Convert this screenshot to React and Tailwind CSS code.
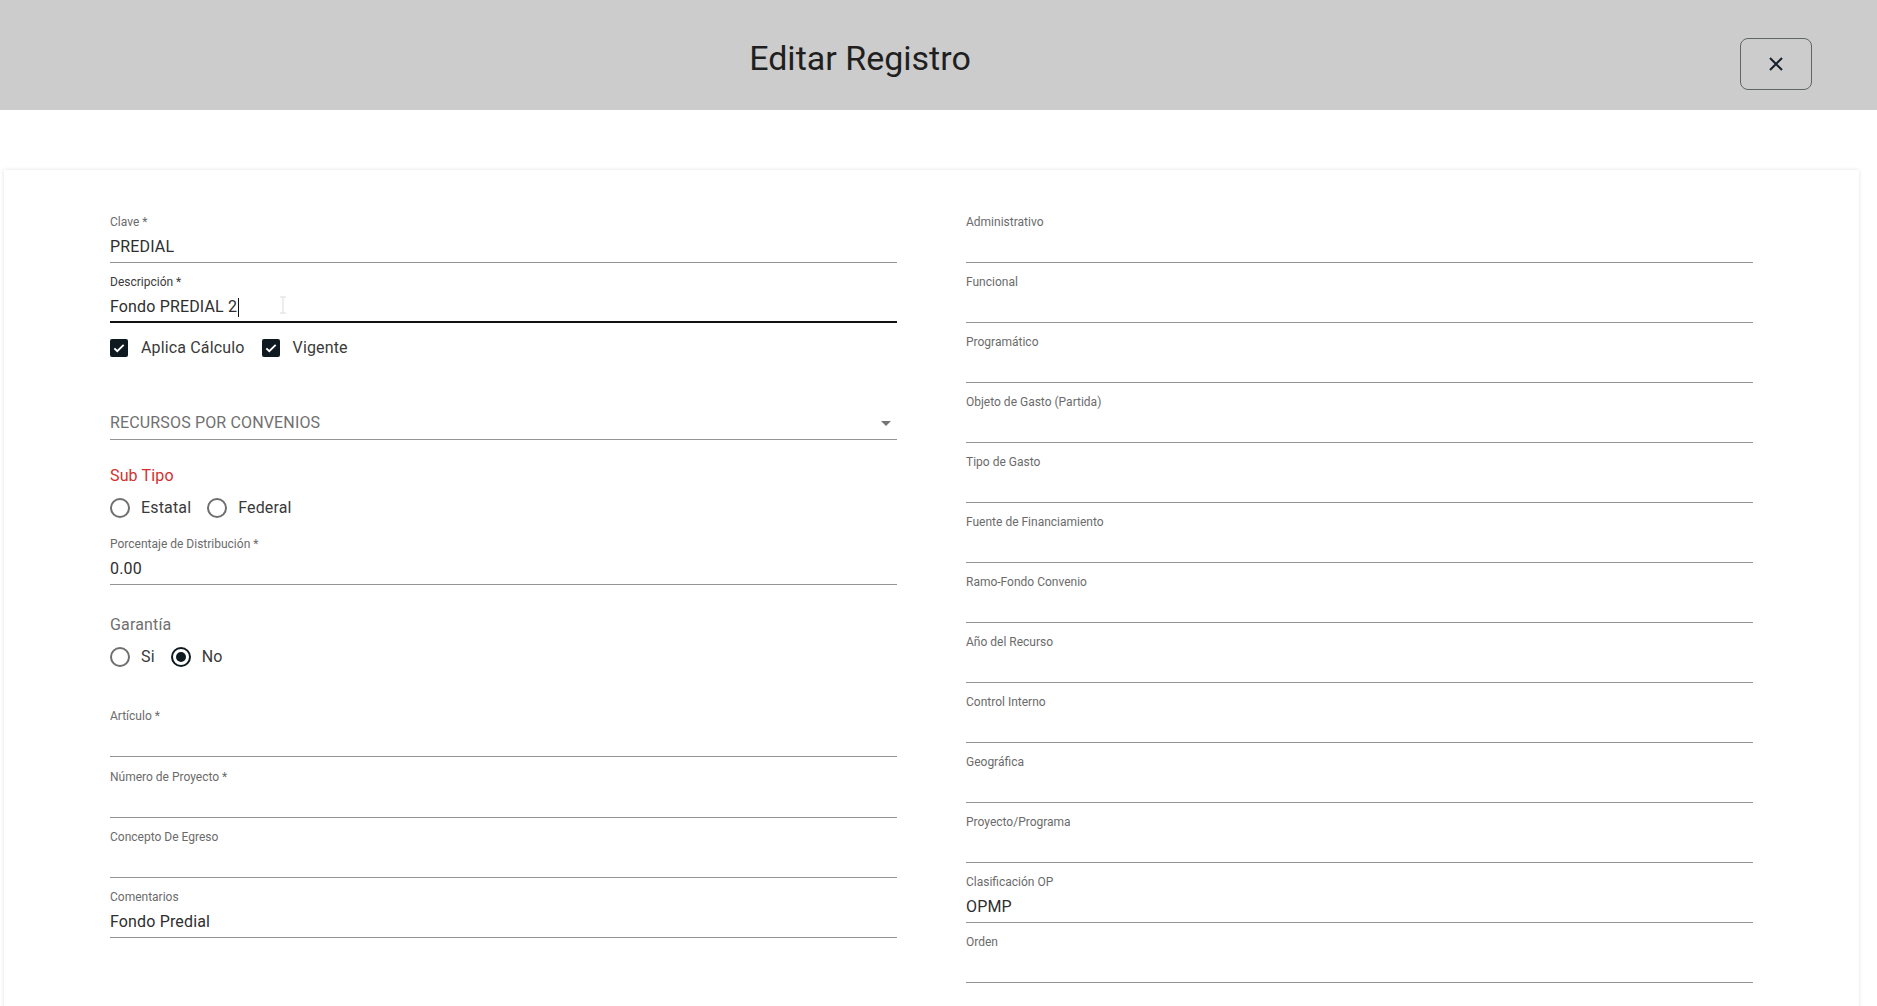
import React from 'react';

const leftTop = [
  { label: 'Clave *', value: 'PREDIAL' },
];

const rightFields = [
  { label: 'Administrativo', value: '' },
  { label: 'Funcional', value: '' },
  { label: 'Programático', value: '' },
  { label: 'Objeto de Gasto (Partida)', value: '' },
  { label: 'Tipo de Gasto', value: '' },
  { label: 'Fuente de Financiamiento', value: '' },
  { label: 'Ramo-Fondo Convenio', value: '' },
  { label: 'Año del Recurso', value: '' },
  { label: 'Control Interno', value: '' },
  { label: 'Geográfica', value: '' },
  { label: 'Proyecto/Programa', value: '' },
  { label: 'Clasificación OP', value: 'OPMP' },
  { label: 'Orden', value: '' },
];

const Field = ({ label, value, className = '' }) => (
  <div className={`pt-[2px] pb-[3px] border-b border-[#949494] ${className}`}>
    <div className="h-[14px] text-[12px] leading-[14px] text-[#6b6b6b]">{label}</div>
    <div className="mt-[6px] h-[24px] text-[16px] leading-[24px] tracking-[0.15px] text-[#2e2e2e]">{value}</div>
  </div>
);

const Checkbox = ({ label }) => (
  <label className="flex items-center">
    <span className="flex h-[18px] w-[18px] items-center justify-center rounded-[2px] bg-[#0f1a20]">
      <svg width="14" height="14" viewBox="0 0 24 24">
        <path d="M4 12.5l5 5L20 6.5" fill="none" stroke="#fff" strokeWidth="3.2" />
      </svg>
    </span>
    <span className="ml-[13px] text-[16px] leading-[24px] tracking-[0.15px] text-[#3a3a3a]">{label}</span>
  </label>
);

const Radio = ({ label, checked }) => (
  <label className="flex items-center">
    <span
      className={`flex h-[20px] w-[20px] items-center justify-center rounded-full border-2 ${
        checked ? 'border-[#0f1a20]' : 'border-[#6e6e6e]'
      }`}
    >
      {checked && <span className="h-[10px] w-[10px] rounded-full bg-[#0f1a20]" />}
    </span>
    <span className="ml-[11px] text-[16px] leading-[24px] tracking-[0.15px] text-[#3a3a3a]">{label}</span>
  </label>
);

export default function App() {
  return (
    <div className="min-h-screen bg-white font-['Roboto','Liberation_Sans',sans-serif]">
      <header className="flex h-[110px] items-start gap-[20px] bg-[#cccccc] pr-[65px]">
        <h1 className="flex-1 pt-[38px] text-center text-[34px] leading-[40px] font-normal text-[#1f1f1f]">
          Editar Registro
        </h1>
        <button className="mt-[38px] flex h-[52px] w-[72px] items-center justify-center rounded-[8px] border border-[#5f6664]">
          <svg width="16" height="16" viewBox="0 0 16 16">
            <path d="M2 2l12 12M14 2L2 14" stroke="#15202b" strokeWidth="2" />
          </svg>
        </button>
      </header>

      <div className="pt-[60px]">
        <div className="ml-[4px] w-[1855px] min-h-[900px] bg-white px-[106px] pt-[43px] pb-[40px] shadow-[0_0_4px_rgba(0,0,0,0.12)]">
          <div className="grid grid-cols-2 gap-x-[69px]">
            {/* left column */}
            <div className="flex flex-col">
              {leftTop.map((f) => (
                <Field key={f.label} label={f.label} value={f.value} />
              ))}

              <div className="relative mt-[10px] pt-[2px] pb-[2px] border-b-2 border-[#111111]">
                <div className="h-[14px] text-[12px] leading-[14px] text-[#3a3a3a]">Descripción *</div>
                <div className="mt-[6px] flex h-[24px] items-center text-[16px] leading-[24px] tracking-[0.15px] text-[#2e2e2e]">
                  <span>Fondo PREDIAL 2</span>
                  <span className="ml-[1px] h-[19px] w-[1px] bg-[#111]" />
                </div>
                <svg className="absolute left-[169px] top-[23px]" width="8" height="18" viewBox="0 0 8 18">
                  <path d="M1 1h6M4 1v16M1 17h6" stroke="#dcdcdc" strokeWidth="1" fill="none" />
                </svg>
              </div>

              <div className="mt-[13px] flex h-[24px] items-center gap-[17px]">
                <Checkbox label="Aplica Cálculo" />
                <Checkbox label="Vigente" />
              </div>

              <div className="mt-[51px] flex h-[29px] items-start justify-between border-b border-[#949494] pb-[5px]">
                <span className="text-[16px] leading-[24px] tracking-[0.15px] text-[#707070]">RECURSOS POR CONVENIOS</span>
                <svg className="mt-[10px] mr-[6px]" width="10" height="5" viewBox="0 0 10 5">
                  <path d="M0 0h10L5 5z" fill="#757575" />
                </svg>
              </div>

              <div className="mt-[24px] h-[24px] text-[16px] leading-[24px] tracking-[0.15px] text-[#d32f2f]">Sub Tipo</div>

              <div className="mt-[8px] flex h-[24px] items-center gap-[16px]">
                <Radio label="Estatal" />
                <Radio label="Federal" />
              </div>

              <Field className="mt-[15px]" label="Porcentaje de Distribución *" value="0.00" />

              <div className="mt-[28px] h-[24px] text-[16px] leading-[24px] tracking-[0.15px] text-[#707070]">Garantía</div>

              <div className="mt-[8px] flex h-[24px] items-center gap-[16px]">
                <Radio label="Si" />
                <Radio label="No" checked />
              </div>

              <Field className="mt-[38px]" label="Artículo *" value="" />
              <Field className="mt-[11px]" label="Número de Proyecto *" value="" />
              <Field className="mt-[10px]" label="Concepto De Egreso" value="" />
              <Field className="mt-[10px]" label="Comentarios" value="Fondo Predial" />
            </div>

            {/* right column */}
            <div className="flex flex-col gap-[10px]">
              {rightFields.map((f) => (
                <Field key={f.label} label={f.label} value={f.value} />
              ))}
            </div>
          </div>
        </div>
      </div>
    </div>
  );
}
